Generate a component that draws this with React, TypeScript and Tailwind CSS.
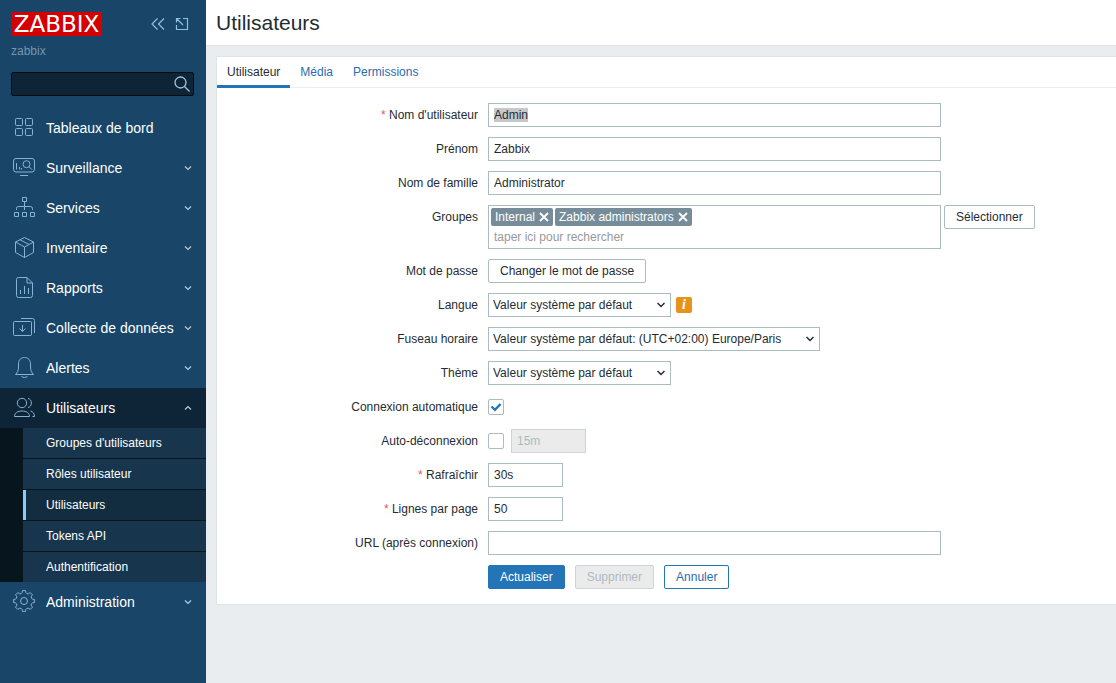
import { useEffect, useRef, type ReactNode } from "react";

const polar = (deg: number, r: number) => {
  const a = (deg * Math.PI) / 180;
  return `${(12 + r * Math.cos(a)).toFixed(2)} ${(11 + r * Math.sin(a)).toFixed(2)}`;
};

// Eight-toothed cog with scooped notches, centred on (12, 11)
const GEAR_PATH =
  Array.from({ length: 8 })
    .map((_, i) => {
      const base = i * 45 - 90;
      const start = `${i === 0 ? "M" : "L"}${polar(base - 9, 10.5)}`;
      return `${start}L${polar(base + 9, 10.5)}L${polar(base + 12, 8.8)}Q${polar(base + 22.5, 7)} ${polar(base + 33, 8.8)}`;
    })
    .join("") + "Z";

const ICONS: Record<string, ReactNode> = {
  dashboard: (
    <>
      <rect x="3.5" y="2.5" width="7" height="7" rx="1" />
      <rect x="13.5" y="2.5" width="7" height="7" rx="1" />
      <rect x="3.5" y="12.5" width="7" height="7" rx="1" />
      <rect x="13.5" y="12.5" width="7" height="7" rx="1" />
    </>
  ),
  monitoring: (
    <>
      <rect x="1.5" y="2.5" width="21" height="13.5" rx="2.5" />
      <path d="M8 19.5h8M4.5 7v6.5M7.5 11v2.5M9.5 12v1.5" />
      <circle cx="14.5" cy="8.2" r="3.5" />
      <path d="M17 10.7l3 3" />
    </>
  ),
  services: (
    <>
      <rect x="10.5" y="1.5" width="4" height="4" />
      <rect x="2.5" y="16.5" width="4" height="4" />
      <rect x="10.5" y="16.5" width="4" height="4" />
      <rect x="18.5" y="16.5" width="4" height="4" />
      <path d="M12.5 5.5V14M4.5 14v-1.5q0-2 2-2h12q2 0 2 2V14" />
    </>
  ),
  inventory: <path d="M12.5 1.5l9 4.5v10.5l-9 5-9-5V6zM3.5 6l9 5 9-5M12.5 11v10.5M8 3.8l9 4.7" />,
  reports: (
    <>
      <path d="M15 1.5H6.5q-2 0-2 2v16q0 2 2 2h12q2 0 2-2V7zM15 1.5V7h5.5" />
      <path d="M8.5 14v4M12.5 10v8M16.5 12v6" />
    </>
  ),
  collection: (
    <>
      <rect x="1.5" y="5.5" width="18" height="14" rx="1" />
      <path d="M9 2.5h11.5q2 0 2 2V17M10.500 9v6.500M7.500 12.500l3 3 3-3" />
    </>
  ),
  alerts: (
    <path d="M3.5 18.5h18c-2-2-3-4-3-7.5V8c0-4-2.500-6.500-6-6.500S6.500 4 6.500 8v3c0 3.500-1 5.500-3 7.500zM9.500 20.500c2 1.300 4 1.300 6 0" />
  ),
  users: (
    <>
      <circle cx="10" cy="7" r="4.7" />
      <path d="M2.5 20.5c0-3.5 3-5.5 7.5-5.5s7.5 2 7.5 5.5zM16 2.500c4.500.5 4.500 8.500 0 9M18.500 15c2.500.8 4 2.500 4 5.500h-2" />
    </>
  ),
  admin: (
    <>
      <path d={GEAR_PATH} />
      <circle cx="12" cy="11" r="3.5" />
    </>
  ),
};

interface MenuItem {
  icon: string;
  label: string;
  children?: string[];
  leaf?: boolean;
}

const MENU: MenuItem[] = [
  { icon: "dashboard", label: "Tableaux de bord", leaf: true },
  { icon: "monitoring", label: "Surveillance" },
  { icon: "services", label: "Services" },
  { icon: "inventory", label: "Inventaire" },
  { icon: "reports", label: "Rapports" },
  { icon: "collection", label: "Collecte de données" },
  { icon: "alerts", label: "Alertes" },
  {
    icon: "users",
    label: "Utilisateurs",
    children: ["Groupes d'utilisateurs", "Rôles utilisateur", "Utilisateurs", "Tokens API", "Authentification"],
  },
  { icon: "admin", label: "Administration" },
];

const INPUT = "h-6 border border-[#acbbc2] bg-white px-[5px] outline-none";
const BUTTON = "h-6 rounded-[2px] border px-[11px]";

function Sidebar() {
  return (
    <aside className="w-[206px] shrink-0 bg-[#184568] text-white">
      <div className="flex items-start justify-between pt-3 pr-[17px] pl-[11px]">
        <a
          href="#"
          className="h-6 w-[91px] bg-[#d40000] text-center font-['DejaVu_Sans',sans-serif] text-[23px] leading-6"
        >
          ZABBIX
        </a>
        <div className="flex gap-[10px] pt-[5px] text-[#8fc0e2]">
          <button aria-label="Réduire le menu">
            <svg className="size-[14px]" viewBox="0 0 14 14" fill="none" stroke="currentColor" strokeWidth="1.2">
              <path d="M6.5 1.5L1 7l5.5 5.5M13 1.5L7.5 7l5.5 5.5" />
            </svg>
          </button>
          <button aria-label="Masquer le menu">
            <svg className="size-[14px]" viewBox="0 0 14 14" fill="none" stroke="currentColor" strokeWidth="1.2">
              <path d="M8 1.5h4.500v11h-11V8M1.500 5.500v-4h4M1.500 1.500L8 8" />
            </svg>
          </button>
        </div>
      </div>
      <div className="mt-2 pl-[11px] leading-[14px] text-[#7795aa]">zabbix</div>
      <form className="mt-[14px] mr-3 ml-[11px] flex h-6 rounded-[2px] border border-[#040d14] bg-[#0e2537]">
        <input aria-label="Rechercher" className="min-w-0 flex-1 bg-transparent px-1 outline-none" />
        <button type="button" aria-label="Lancer la recherche" className="pr-[3px] text-[#9cc6e2]">
          <svg className="size-4" viewBox="0 0 16 16" fill="none" stroke="currentColor" strokeWidth="1.3">
            <circle cx="6.5" cy="6.5" r="5.5" />
            <path d="M10.5 10.5l5 5" />
          </svg>
        </button>
      </form>
      <nav className="mt-3">
        {MENU.map((item) => (
          <div key={item.label}>
            <a
              href="#"
              className={`flex h-10 items-center gap-[10px] pr-[14px] pl-3 text-sm ${item.children ? "bg-[#0e2537]" : ""}`}
            >
              <svg
                className="size-6 shrink-0 text-[#86b4d6]"
                viewBox="0 0 24 24"
                fill="none"
                stroke="currentColor"
                strokeLinejoin="round"
              >
                {ICONS[item.icon]}
              </svg>
              <span className="flex-1 whitespace-nowrap">{item.label}</span>
              {!item.leaf && (
                <svg className="size-2 shrink-0 text-[#b4cfe2]" viewBox="0 0 8 8" fill="none" stroke="currentColor" strokeWidth="1.2">
                  <path d={item.children ? "M1 5.5l3-3 3 3" : "M1 2.5l3 3 3-3"} />
                </svg>
              )}
            </a>
            {item.children && (
              <ul className="flex flex-col gap-px bg-[#07151f] pl-[23px]">
                {item.children.map((child) => (
                  <li key={child}>
                    <a
                      href="#"
                      className={`flex h-[30px] items-center border-l-3 pl-5 ${
                        child === item.label ? "border-[#85ccff] bg-[#122c40]" : "border-[#17364d] bg-[#17364d]"
                      }`}
                    >
                      {child}
                    </a>
                  </li>
                ))}
              </ul>
            )}
          </div>
        ))}
      </nav>
    </aside>
  );
}

interface RowProps {
  label: string;
  htmlFor?: string;
  required?: boolean;
  children: ReactNode;
}

function Row({ label, htmlFor, required, children }: RowProps) {
  return (
    <div className="grid grid-cols-[261px_1fr] gap-[10px]">
      <label htmlFor={htmlFor} className="text-right leading-6">
        {required && <span className="text-[#e45959]">* </span>}
        {label}
      </label>
      <div className="flex min-h-6 items-center">{children}</div>
    </div>
  );
}

function Select({ id, value, width }: { id: string; value: string; width: string }) {
  return (
    <div className={`relative ${width}`}>
      <select id={id} className="h-6 w-full appearance-none border border-[#acbbc2] bg-white px-1 outline-none">
        <option>{value}</option>
      </select>
      <svg
        className="pointer-events-none absolute top-2 right-[6px] size-2"
        viewBox="0 0 8 8"
        fill="none"
        stroke="currentColor"
        strokeWidth="1.5"
      >
        <path d="M.5 2L4 5.500 7.500 2" />
      </svg>
    </div>
  );
}

function Checkbox({ id, checked }: { id: string; checked?: boolean }) {
  return (
    <span className="grid size-4">
      <input
        id={id}
        type="checkbox"
        defaultChecked={checked}
        className="peer col-start-1 row-start-1 size-4 appearance-none rounded-[2px] border border-[#acbbc2] bg-white"
      />
      <svg
        className="pointer-events-none invisible col-start-1 row-start-1 size-4 text-[#2474b8] peer-checked:visible"
        viewBox="0 0 16 16"
        fill="none"
        stroke="currentColor"
        strokeWidth="2.4"
      >
        <path d="M3.5 7.5L7 10.8 12.500 5" />
      </svg>
    </span>
  );
}

function Chip({ name }: { name: string }) {
  return (
    <span className="flex h-[18px] items-center gap-1 rounded-[2px] bg-[#768d99] px-1 text-white">
      {name}
      <button type="button" aria-label={`Retirer ${name}`}>
        <svg className="size-2.5" viewBox="0 0 10 10" fill="none" stroke="currentColor" strokeWidth="1.8">
          <path d="M1 1l8 8M9 1L1 9" />
        </svg>
      </button>
    </span>
  );
}

export default function App() {
  const usernameRef = useRef<HTMLInputElement>(null);

  useEffect(() => {
    usernameRef.current?.focus();
    usernameRef.current?.select();
  }, []);

  return (
    <div className="flex min-h-screen bg-[#e9edf0] font-['Liberation_Sans',Arial,sans-serif] text-xs text-[#1f2c33]">
      <Sidebar />
      <main className="min-w-0 flex-1">
        <header className="border-b border-[#dfe4e7] bg-white px-[10px] py-[9px]">
          <h1 className="text-[21px] leading-[27px]">Utilisateurs</h1>
        </header>
        <div className="pt-[10px] pl-[10px]">
          <div className="border-y border-l border-[#dfe4e7] bg-white">
            <nav className="flex h-[31px] border-b border-[#ebeef0] text-[#2b6cb0]">
              <a href="#" className="h-[31px] border-b-3 border-[#2474b8] px-[10px] leading-[30px] text-[#1f2c33]">
                Utilisateur
              </a>
              <a href="#" className="px-[10px] leading-[30px]">
                Média
              </a>
              <a href="#" className="px-[10px] leading-[30px]">
                Permissions
              </a>
            </nav>
            <form className="flex flex-col gap-[10px] py-[15px]">
              <Row label="Nom d'utilisateur" htmlFor="username" required>
                <input
                  id="username"
                  ref={usernameRef}
                  defaultValue="Admin"
                  className={`${INPUT} w-[453px] selection:bg-[#c8c8c8] selection:text-[#1f2c33]`}
                />
              </Row>
              <Row label="Prénom" htmlFor="name">
                <input id="name" defaultValue="Zabbix" className={`${INPUT} w-[453px]`} />
              </Row>
              <Row label="Nom de famille" htmlFor="surname">
                <input id="surname" defaultValue="Administrator" className={`${INPUT} w-[453px]`} />
              </Row>
              <Row label="Groupes" htmlFor="groups">
                <div className="flex items-start gap-[3px]">
                  <div className="h-11 w-[453px] border border-[#acbbc2] p-[2px]">
                    <div className="flex gap-[2px]">
                      <Chip name="Internal" />
                      <Chip name="Zabbix administrators" />
                    </div>
                    <input
                      id="groups"
                      placeholder="taper ici pour rechercher"
                      className="h-[22px] w-full px-[3px] outline-none placeholder:text-[#999999]"
                    />
                  </div>
                  <button type="button" className={`${BUTTON} border-[#acbbc2]`}>
                    Sélectionner
                  </button>
                </div>
              </Row>
              <Row label="Mot de passe" htmlFor="password">
                <button id="password" type="button" className={`${BUTTON} border-[#acbbc2]`}>
                  Changer le mot de passe
                </button>
              </Row>
              <Row label="Langue" htmlFor="lang">
                <Select id="lang" value="Valeur système par défaut" width="w-[183px]" />
                <button
                  type="button"
                  aria-label="Information"
                  className="ml-[5px] size-4 rounded-[2px] bg-[#e79319] font-['Liberation_Serif',serif] text-sm leading-4 font-bold text-white italic"
                >
                  i
                </button>
              </Row>
              <Row label="Fuseau horaire" htmlFor="timezone">
                <Select id="timezone" value="Valeur système par défaut: (UTC+02:00) Europe/Paris" width="w-[332px]" />
              </Row>
              <Row label="Thème" htmlFor="theme">
                <Select id="theme" value="Valeur système par défaut" width="w-[183px]" />
              </Row>
              <Row label="Connexion automatique" htmlFor="autologin">
                <Checkbox id="autologin" checked />
              </Row>
              <Row label="Auto-déconnexion" htmlFor="autologout">
                <Checkbox id="autologout" />
                <input
                  aria-label="Délai d'auto-déconnexion"
                  defaultValue="15m"
                  disabled
                  className="ml-[7px] h-6 w-[75px] border border-[#ccd5d9] bg-[#ebebeb] px-[5px] text-[#acbbc2]"
                />
              </Row>
              <Row label="Rafraîchir" htmlFor="refresh" required>
                <input id="refresh" defaultValue="30s" className={`${INPUT} w-[75px]`} />
              </Row>
              <Row label="Lignes par page" htmlFor="rows" required>
                <input id="rows" defaultValue="50" className={`${INPUT} w-[75px]`} />
              </Row>
              <Row label="URL (après connexion)" htmlFor="url">
                <input id="url" className={`${INPUT} w-[453px]`} />
              </Row>
              <div className="flex gap-[10px] pl-[271px]">
                <button type="button" className={`${BUTTON} border-[#2474b8] bg-[#2474b8] text-white`}>
                  Actualiser
                </button>
                <button type="button" disabled className={`${BUTTON} border-[#ccd5d9] bg-[#ebebeb] text-[#acbbc2]`}>
                  Supprimer
                </button>
                <button type="button" className={`${BUTTON} border-[#2474b8] text-[#2b6cb0]`}>
                  Annuler
                </button>
              </div>
            </form>
          </div>
        </div>
      </main>
    </div>
  );
}
